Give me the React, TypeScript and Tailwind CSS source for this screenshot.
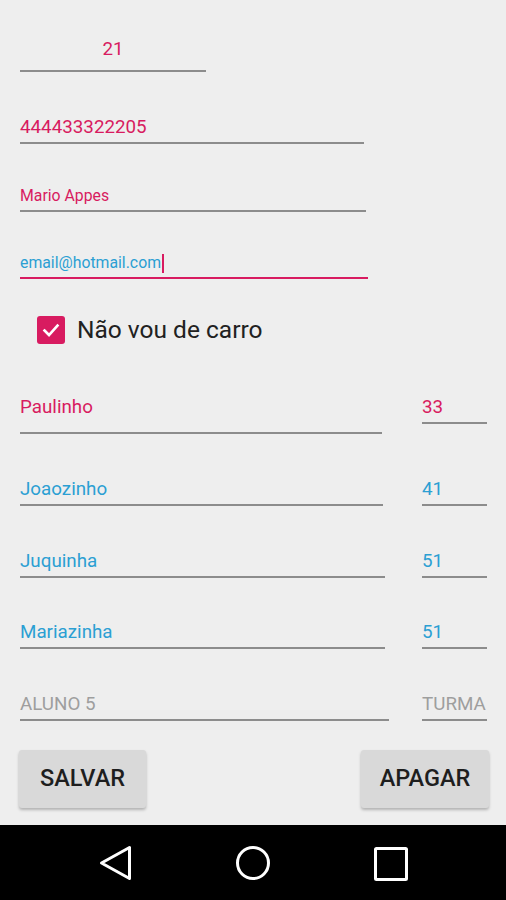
import React from 'react'

const pink = 'text-[#d81b60]'
const blue = 'text-[#2b9fd3]'

function StudentRow({ name, num, color, nameWidth, gap, numPb = 'pb-[3px]', namePb = 'pb-[3px]' }: {
  name: string
  num: string
  color: string
  nameWidth: string
  gap: string
  numPb?: string
  namePb?: string
}) {
  return (
    <div className={`flex items-start justify-between ${gap}`}>
      <div className={`${nameWidth} border-b-2 border-[#8c8c8c] ${namePb} text-[18.8px] leading-[24px] ${color}`}>{name}</div>
      <div className={`w-[65px] border-b-2 border-[#8c8c8c] ${numPb} text-[18.8px] leading-[24px] ${color}`}>{num}</div>
    </div>
  )
}

function App() {
  return (
    <div className="w-[506px] h-[900px] flex flex-col bg-[#eeeeee] font-['Roboto','Liberation_Sans',sans-serif]">
      <div className="h-[825px] flex flex-col pl-[20px] pr-[19px]">
        <div className="mt-[37px] w-[186px] border-b-2 border-[#8c8c8c] pb-[9px] text-center text-[18.8px] leading-[24px] text-[#d81b60]">
          21
        </div>
        <div className={`mt-[43px] w-[344px] border-b-2 border-[#8c8c8c] pb-[3px] text-[18.8px] leading-[24px] ${pink}`}>
          444433322205
        </div>
        <div className={`mt-[42px] w-[346px] border-b-2 border-[#8c8c8c] pb-[4px] text-[15.8px] leading-[20px] ${pink}`}>
          Mario Appes
        </div>
        <div className={`mt-[41px] w-[348px] border-b-2 border-[#d81b60] pb-[4px] text-[15.8px] leading-[20px] ${blue} flex items-center`}>
          <span>email@hotmail.com</span>
          <span className="ml-[1px] inline-block w-[2px] h-[19px] bg-[#d81b60]" />
        </div>

        <label className="mt-[37px] ml-[17px] flex items-center gap-[12px]">
          <span className="w-[28px] h-[28px] rounded-[3px] bg-[#d81b60] flex items-center justify-center">
            <svg width="20" height="20" viewBox="0 0 20 20" fill="none">
              <path d="M3.5 10.5 L8 15 L16.5 5.5" stroke="white" strokeWidth="2.6" strokeLinecap="square" />
            </svg>
          </span>
          <span className="text-[24.5px] leading-[28px] text-[#212121]">Não vou de carro</span>
        </label>

        <StudentRow name="Paulinho" num="33" color={pink} nameWidth="w-[362px]" gap="mt-[51px]" namePb="pb-[13px]" />
        <StudentRow name="Joaozinho" num="41" color={blue} nameWidth="w-[363px]" gap="mt-[43px]" />
        <StudentRow name="Juquinha" num="51" color={blue} nameWidth="w-[365px]" gap="mt-[43px]" />
        <StudentRow name="Mariazinha" num="51" color={blue} nameWidth="w-[365px]" gap="mt-[42px]" />
        <StudentRow name="ALUNO 5" num="TURMA" color="text-[#9e9e9e]" nameWidth="w-[369px]" gap="mt-[43px]" />

        <div className="mt-[29px] flex justify-between">
          <button className="w-[127px] h-[58px] -ml-[1px] rounded-[3px] bg-[#d9d9d9] shadow-[0_2px_3px_rgba(0,0,0,0.25)] text-[23.5px] font-medium text-[#1e1e1e]">
            SALVAR
          </button>
          <button className="w-[128px] h-[58px] -mr-[2px] rounded-[3px] bg-[#d9d9d9] shadow-[0_2px_3px_rgba(0,0,0,0.25)] text-[23.5px] font-medium text-[#1e1e1e]">
            APAGAR
          </button>
        </div>
      </div>

      <div className="h-[75px] bg-black flex items-center">
        <svg width="506" height="75" viewBox="0 0 506 75">
          <path d="M101.5 38 L129.5 22.5 L129.5 53.5 Z" fill="none" stroke="white" strokeWidth="3" strokeLinejoin="round" />
          <circle cx="253" cy="38" r="15.5" fill="none" stroke="white" strokeWidth="3" />
          <rect x="375.5" y="23.5" width="31" height="31" rx="1" fill="none" stroke="white" strokeWidth="3" />
        </svg>
      </div>
    </div>
  )
}

export default App
